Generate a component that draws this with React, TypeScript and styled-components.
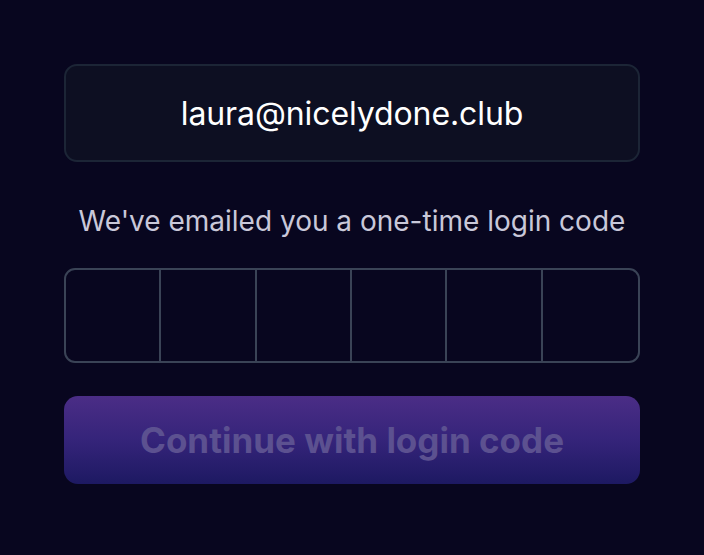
import styled, { createGlobalStyle } from "styled-components";

const Global = createGlobalStyle`
  html, body {
    margin: 0;
    padding: 0;
    background: #08061f;
  }
  body {
    font-family: Inter, "Noto Sans", sans-serif;
  }
`;

const Page = styled.div`
  width: 704px;
  height: 555px;
  box-sizing: border-box;
  padding: 64px 64px 0 64px;
  background: #08061f;
`;

const Form = styled.div`
  width: 576px;
  display: flex;
  flex-direction: column;
`;

const EmailBox = styled.div`
  height: 98px;
  box-sizing: border-box;
  border: 2px solid #1c2536;
  border-radius: 13px;
  background: #0d0f22;
  display: flex;
  align-items: center;
  justify-content: center;
  color: #ffffff;
  font-size: 32px;
  letter-spacing: -0.1px;
`;

const Hint = styled.p`
  margin: 36px 0 0 0;
  text-align: center;
  color: #c9c8d9;
  font-size: 28px;
  line-height: 46px;
`;

const CodeRow = styled.div`
  margin-top: 24px;
  height: 95px;
  box-sizing: border-box;
  border: 2px solid #3a4356;
  border-radius: 11px;
  display: grid;
  grid-template-columns: repeat(6, 1fr);
  overflow: hidden;
`;

const Cell = styled.div<{ $last?: boolean }>`
  border-right: ${(p) => (p.$last ? "none" : "2px solid #3a4356")};
`;

const Button = styled.button`
  margin-top: 33px;
  height: 88px;
  border: none;
  border-radius: 14px;
  background: linear-gradient(180deg, #4b2d86 0%, #35247a 50%, #1d1962 100%);
  color: #5c5190;
  font-family: Inter, "Noto Sans", sans-serif;
  font-size: 35px;
  font-weight: 700;
  cursor: not-allowed;
`;

export default function App() {
  return (
    <Page>
      <Global />
      <Form>
        <EmailBox>laura@nicelydone.club</EmailBox>
        <Hint>We've emailed you a one-time login code</Hint>
        <CodeRow>
          {[0, 1, 2, 3, 4, 5].map((i) => (
            <Cell key={i} $last={i === 5} />
          ))}
        </CodeRow>
        <Button disabled>Continue with login code</Button>
      </Form>
    </Page>
  );
}
